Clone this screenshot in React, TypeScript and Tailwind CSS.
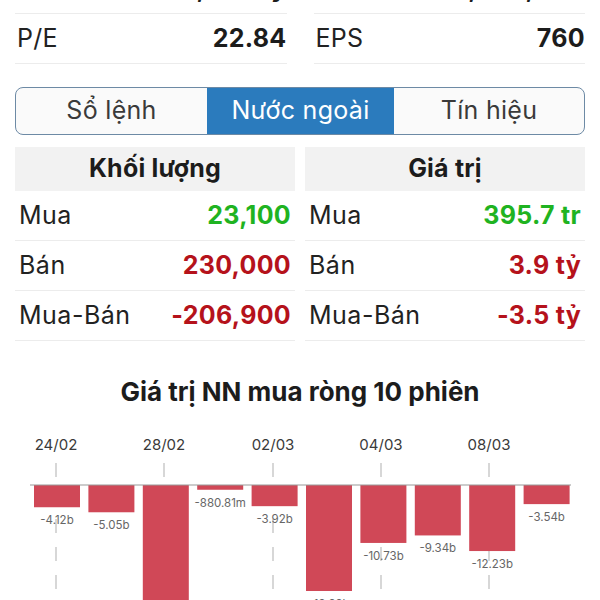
import React from "react";

const font = { fontFamily: "Inter, 'Noto Sans', sans-serif" };

const topRows = [
  [
    { label: "Vốn hóa", value: "1,564 tỷ" },
    { label: "KLCP", value: "68,520,000" },
  ],
  [
    { label: "P/E", value: "22.84" },
    { label: "EPS", value: "760" },
  ],
];

const volume = [
  { label: "Mua", value: "23,100", color: "text-[#1fb321]" },
  { label: "Bán", value: "230,000", color: "text-[#b5121b]" },
  { label: "Mua-Bán", value: "-206,900", color: "text-[#b5121b]" },
];

const amount = [
  { label: "Mua", value: "395.7 tr", color: "text-[#1fb321]" },
  { label: "Bán", value: "3.9 tỷ", color: "text-[#b5121b]" },
  { label: "Mua-Bán", value: "-3.5 tỷ", color: "text-[#b5121b]" },
];

const bars = [
  { v: 4.12, label: "-4.12b" },
  { v: 5.05, label: "-5.05b" },
  { v: 26.15, label: "-26.15b" },
  { v: 0.88, label: "-880.81m" },
  { v: 3.92, label: "-3.92b" },
  { v: 19.63, label: "-19.63b" },
  { v: 10.73, label: "-10.73b" },
  { v: 9.34, label: "-9.34b" },
  { v: 12.23, label: "-12.23b" },
  { v: 3.54, label: "-3.54b" },
];

const dates = [
  { x: 56, t: "24/02" },
  { x: 164, t: "28/02" },
  { x: 273, t: "02/03" },
  { x: 381, t: "04/03" },
  { x: 489, t: "08/03" },
];

function StatTable({ title, rows }: { title: string; rows: typeof volume }) {
  return (
    <div className="flex flex-col">
      <div className="h-[44px] bg-[#f2f2f2] flex items-center justify-center text-[25px] font-bold tracking-[0.2px] text-[#1c1c1c]">
        {title}
      </div>
      {rows.map((r) => (
        <div
          key={r.label}
          className="h-[50px] flex items-center justify-between px-[4px] border-b border-[#ececec] text-[25px]"
        >
          <span className="text-[#222] tracking-[0.5px]">{r.label}</span>
          <span className={`font-bold tracking-[0.3px] ${r.color}`}>{r.value}</span>
        </div>
      ))}
    </div>
  );
}

function Chart() {
  // svg top sits at page y = 420
  const top = 420;
  const base = 483 - top;
  const scale = 5.4;
  return (
    <svg width="600" height="180" viewBox="0 0 600 180" className="block">
      {dates.map((d) => (
        <g key={d.t}>
          <text
            x={d.x}
            y={443 - top + 5}
            textAnchor="middle"
            fontSize="15"
            fill="#3a3a3a"
            fontFamily="Inter, sans-serif"
          >
            {d.t}
          </text>
          <line x1={d.x} x2={d.x} y1={461 - top} y2={475 - top} stroke="#bdbdbd" strokeWidth="1.2" />
          <line
            x1={d.x}
            x2={d.x}
            y1={489 - top}
            y2={180}
            stroke="#bdbdbd"
            strokeWidth="1.2"
            strokeDasharray="14 14"
          />
        </g>
      ))}
      {bars.map((b, i) => {
        const x = 34 + i * 54.4;
        const h = b.v * scale;
        return (
          <g key={i}>
            <rect x={x} y={base} width="46" height={h} fill="#d04857" />
            <text
              x={x + 23}
              y={base + h + 17}
              textAnchor="middle"
              fontSize="11.5"
              fill="#666"
              fontFamily="Inter, sans-serif"
            >
              {b.label}
            </text>
          </g>
        );
      })}
      <line x1="30" x2="571" y1={base} y2={base} stroke="#9a9a9a" strokeWidth="1.2" />
    </svg>
  );
}

export default function App() {
  return (
    <div className="w-[600px] h-[600px] overflow-hidden bg-white" style={font}>
      <div className="mt-[-36px] px-[15px]">
        {topRows.map((row, ri) => (
          <div key={ri} className="grid grid-cols-2 gap-x-[27px]">
            {row.map((c) => (
              <div
                key={c.label}
                className="h-[50px] flex items-center justify-between pl-[2px] border-b border-[#ececec] text-[25px]"
              >
                <span className="text-[#222] tracking-[0.3px]">{c.label}</span>
                <span className="font-bold tracking-[0.3px] text-[#1c1c1c]">{c.value}</span>
              </div>
            ))}
          </div>
        ))}
      </div>

      <div className="mx-[15px] mt-[23px] h-[48px] flex rounded-[8px] border-[1.5px] border-[#6d8aa5] overflow-hidden bg-[#fafafa] text-[25px] tracking-[0.3px]">
        <div className="w-[191px] flex items-center justify-center text-[#3a3a3a]">Sổ lệnh</div>
        <div className="w-[187px] flex items-center justify-center bg-[#2b7bbd] text-white">Nước ngoài</div>
        <div className="flex-1 flex items-center justify-center text-[#3a3a3a]">Tín hiệu</div>
      </div>

      <div className="mx-[15px] mt-[12px] grid grid-cols-2 gap-x-[10px]">
        <StatTable title="Khối lượng" rows={volume} />
        <StatTable title="Giá trị" rows={amount} />
      </div>

      <div className="mt-[31px] text-center text-[26px] font-bold text-[#1c1c1c]">
        Giá trị NN mua ròng 10 phiên
      </div>
      <div className="mt-[11px]">
        <Chart />
      </div>
    </div>
  );
}
